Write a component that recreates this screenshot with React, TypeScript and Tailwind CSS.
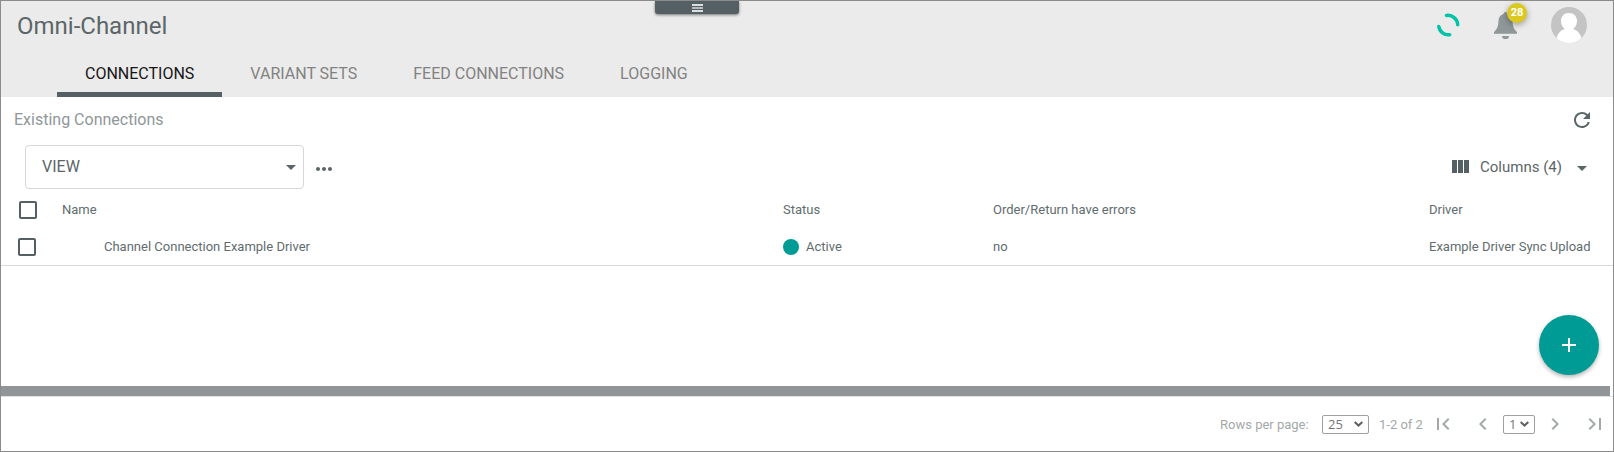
import type { ReactNode } from "react";
import {
  MdAdd,
  MdArrowDropDown,
  MdCheckBoxOutlineBlank,
  MdChevronLeft,
  MdChevronRight,
  MdFirstPage,
  MdLastPage,
  MdMoreHoriz,
  MdRefresh,
} from "react-icons/md";

const tabs = ["CONNECTIONS", "VARIANT SETS", "FEED CONNECTIONS", "LOGGING"];

function Tab({ label, active }: { label: string; active: boolean }) {
  return (
    <button
      className={
        active
          ? "flex h-[47px] items-center border-b-[5px] border-[#556064] px-7 pt-[5px] text-base text-[#161616]"
          : "flex h-[47px] items-center border-b-[5px] border-transparent px-7 pt-[5px] text-base text-[#828282]"
      }
    >
      {label}
    </button>
  );
}

function Spinner() {
  return (
    <svg width="24" height="24" viewBox="0 0 24 24" fill="none" stroke="#00c4a7" strokeWidth="3.5" strokeLinecap="round">
      <path d="M9.500 2.500A9.700 9.700 0 0 1 20.700 11.700" />
      <path d="M1.800 13.500A9.700 9.700 0 0 0 12.700 21.700" />
    </svg>
  );
}

function Bell() {
  return (
    <div className="relative h-7 w-6">
      <svg width="24" height="28" viewBox="0 0 24 28" fill="#8f9798">
        <path d="M11.500 1a2 2 0 0 0-2 1.900C6.100 3.900 4.400 6.800 4.400 10.500C4.400 16.500 2.200 18.700 0 21V22.700H23V21C20.800 18.700 18.600 16.500 18.600 10.500C18.600 6.800 16.900 3.900 13.500 2.900A2 2 0 0 0 11.500 1zM8 25a3.500 3.200 0 0 0 7 0z" />
      </svg>
      <span className="absolute -top-2 left-[13px] flex size-5 items-center justify-center rounded-full bg-[#dbc922] pt-px text-[11px] font-bold text-white shadow-[0_2px_6px_rgba(0,0,0,0.35)]">
        28
      </span>
    </div>
  );
}

function Avatar() {
  return (
    <svg width="36" height="36" viewBox="0 0 36 36">
      <defs>
        <clipPath id="avatar">
          <circle cx="18" cy="18" r="18" />
        </clipPath>
      </defs>
      <g clipPath="url(#avatar)">
        <rect width="36" height="36" fill="#c4c4c4" />
        <path
          d="M18 6c-5 0-8 3.500-8 8c0 3.500 1.600 6.500 3.800 8C9 23.500 6.500 27 5.500 31.500V36H30.500V31.500C29.500 27 27 23.500 22.200 22C24.400 20.500 26 17.500 26 14c0-4.500-3-8-8-8z"
          fill="#fff"
        />
      </g>
    </svg>
  );
}

function PageSelect({ value, width }: { value: string; width: string }) {
  return (
    <button className={`${width} flex h-[19px] items-center justify-between rounded-[2px] border border-[#a0a0a0] pr-[5px] pl-[5px] font-['Open_Sans',sans-serif] text-[13px] text-[#767676]`}>
      <span className="pt-px leading-[17px]">{value}</span>
      <svg width="9" height="6" viewBox="0 0 9 6" fill="none" stroke="#606060" strokeWidth="2">
        <path d="M0.700 0.900L4.500 4.500L8.300 0.900" />
      </svg>
    </button>
  );
}

function Row({ children, name }: { children: ReactNode; name: string }) {
  return <div className={`${name} grid grid-cols-[720px_210px_436px_1fr] items-center`}>{children}</div>;
}

export default function App() {
  return (
    <div className="flex h-[452px] w-[1614px] flex-col overflow-hidden border border-[#8b8b8b] bg-white font-[Roboto,sans-serif] text-[#5b6668]">
      <header className="flex h-24 flex-col justify-between bg-[#ebebeb]">
        <div className="grid h-12 grid-cols-3">
          <h1 className="pt-[9px] pl-4 text-2xl leading-8">Omni-Channel</h1>
          <div className="flex justify-center">
            <button className="-ml-[219px] flex h-[13px] w-[84px] flex-col items-center gap-px rounded-b-[3px] bg-[#556064] pt-[3px] shadow-[0_1px_3px_rgba(0,0,0,0.5)]">
              <span className="h-0.5 w-[11px] bg-[#dcdfe0]" />
              <span className="h-0.5 w-[11px] bg-[#b5babb]" />
              <span className="h-0.5 w-[11px] bg-[#dcdfe0]" />
            </button>
          </div>
          <div className="flex h-12 items-center justify-end gap-[45px] pr-[26px]">
            <Spinner />
            <div className="-ml-[12px] flex items-center gap-[33px]">
              <Bell />
              <Avatar />
            </div>
          </div>
        </div>
        <nav className="flex pl-14">
          {tabs.map((tab, i) => (
            <Tab key={tab} label={tab} active={i === 0} />
          ))}
        </nav>
      </header>

      <div className="flex h-[46px] items-center justify-between pr-[19px] pl-[13px]">
        <h2 className="text-base text-[#8f9798]">Existing Connections</h2>
        <MdRefresh className="size-6" />
      </div>

      <div className="flex h-[46px] items-center justify-between pt-0.5 pr-[19px] pl-6">
        <div className="flex items-center gap-2">
          <button className="flex h-11 w-[279px] items-center justify-between rounded border border-[#d5d8d8] pr-0 pl-4 text-base">
            VIEW
            <MdArrowDropDown className="size-6" />
          </button>
          <MdMoreHoriz className="mt-[3px] size-6" />
        </div>
        <button className="flex items-center text-[15px]">
          <svg width="24" height="24" viewBox="0 0 24 24" fill="#556064">
            <path d="M10 18h5V5h-5v13zm-6 0h5V5H4v13zM16 5v13h5V5h-5z" />
          </svg>
          <span className="ml-2 w-[90px] text-left">Columns (4)</span>
          <MdArrowDropDown className="mt-0.5 size-6" />
        </button>
      </div>

      <div className="text-[13px] text-[#616c6e]">
        <Row name="h-[41px] pl-[62px]">
          <span className="-ml-[47px] flex items-center">
            <MdCheckBoxOutlineBlank className="size-6 text-[#556064]" />
            <span className="ml-[22px]">Name</span>
          </span>
          <span>Status</span>
          <span>Order/Return have errors</span>
          <span>Driver</span>
        </Row>
        <Row name="h-[36px] border-b border-[#d9dbdb] pb-0.5 pl-[62px]">
          <span className="-ml-12 flex items-center">
            <MdCheckBoxOutlineBlank className="size-6 text-[#556064]" />
            <span className="ml-[65px]">Channel Connection Example Driver</span>
          </span>
          <span className="flex items-center gap-[7px]">
            <span className="size-4 rounded-full bg-[#009b94]" />
            Active
          </span>
          <span>no</span>
          <span>Example Driver Sync Upload</span>
        </Row>
      </div>

      <div className="flex flex-1 items-end justify-end pr-[14px] pb-[11px]">
        <button className="flex size-[60px] items-center justify-center rounded-full bg-[#009b94] text-white shadow-[0_2px_4px_rgba(0,0,0,0.3)]">
          <MdAdd className="size-6" />
        </button>
      </div>

      <div className="border-b border-[#e0e0e0]">
        <div className="h-2.5 w-[1609px] bg-[#919597]" />
      </div>

      <footer className="flex h-[54px] items-center justify-end pr-[6px] text-[13px] text-[#a3a9aa]">
        <span className="w-[102px] pt-px">Rows per page:</span>
        <PageSelect value="25" width="w-[47px]" />
        <span className="ml-[10px] w-[52px] pt-px">1-2 of 2</span>
        <MdFirstPage className="size-6" />
        <MdChevronLeft className="ml-4 size-6" />
        <span className="mr-2 ml-2">
          <PageSelect value="1" width="w-[32px]" />
        </span>
        <MdChevronRight className="size-6" />
        <MdLastPage className="ml-4 size-6" />
      </footer>
    </div>
  );
}
